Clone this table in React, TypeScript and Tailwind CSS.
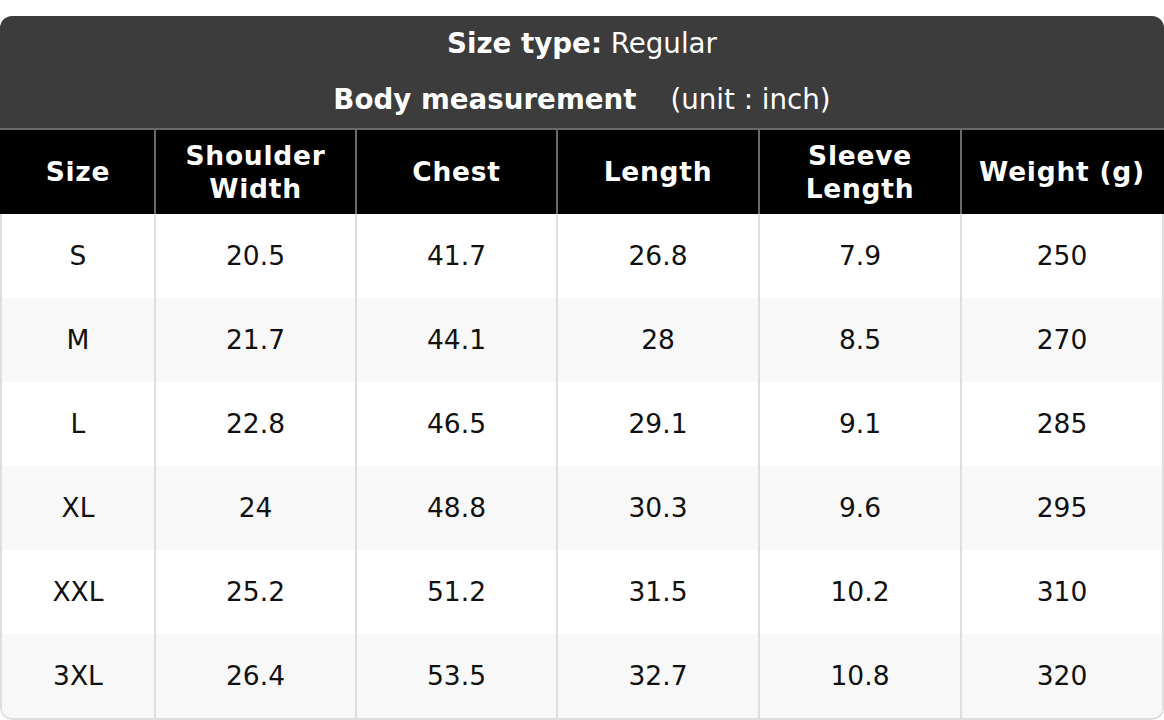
import React from "react";

const rows = [
  ["S", "20.5", "41.7", "26.8", "7.9", "250"],
  ["M", "21.7", "44.1", "28", "8.5", "270"],
  ["L", "22.8", "46.5", "29.1", "9.1", "285"],
  ["XL", "24", "48.8", "30.3", "9.6", "295"],
  ["XXL", "25.2", "51.2", "31.5", "10.2", "310"],
  ["3XL", "26.4", "53.5", "32.7", "10.8", "320"],
];

const heads: string[][] = [
  ["Size"],
  ["Shoulder", "Width"],
  ["Chest"],
  ["Length"],
  ["Sleeve", "Length"],
  ["Weight (g)"],
];

const grid = "grid grid-cols-[152px_201px_201px_202px_202px_202px]";

export default function App() {
  return (
    <div className="bg-white w-[1164px] h-[720px] pt-[16px] font-['DejaVu_Sans',sans-serif] text-[26.5px]">
      <div className="w-[1164px] rounded-[12px] overflow-hidden">
        <div className="bg-[#3c3c3c] text-white text-center text-[27.7px]">
          <div className="h-[56px] flex items-center justify-center">
            <span className="font-bold">Size type:</span>
            <span>&nbsp;Regular</span>
          </div>
          <div className="h-[56px] flex items-center justify-center">
            <span className="font-bold">Body measurement</span>
            <span className="ml-[34px]">(unit : inch)</span>
          </div>
        </div>
        <div className="h-[2px] bg-[#6a6a6a]" />
        <div className={`${grid} bg-black border-x-2 border-black text-white font-bold tracking-[0.75px] leading-[1.25]`}>
          {heads.map((h, i) => (
            <div
              key={i}
              className={`h-[84px] flex flex-col items-center justify-center text-center ${i > 0 ? "border-l-2 border-[#6a6a6a]" : ""}`}
            >
              {h.map((l, j) => (
                <div key={j}>{l}</div>
              ))}
            </div>
          ))}
        </div>
        <div className="border-x-2 border-b-2 border-[#dedede] rounded-b-[12px] overflow-hidden text-[#111]">
          {rows.map((r, ri) => (
            <div key={ri} className={`${grid} ${ri % 2 === 1 ? "bg-[#f8f8f8]" : "bg-white"}`}>
              {r.map((c, ci) => (
                <div
                  key={ci}
                  className={`h-[84px] flex items-center justify-center ${ci > 0 ? "border-l-2 border-[#dedede]" : ""}`}
                >
                  {c}
                </div>
              ))}
            </div>
          ))}
        </div>
      </div>
    </div>
  );
}
